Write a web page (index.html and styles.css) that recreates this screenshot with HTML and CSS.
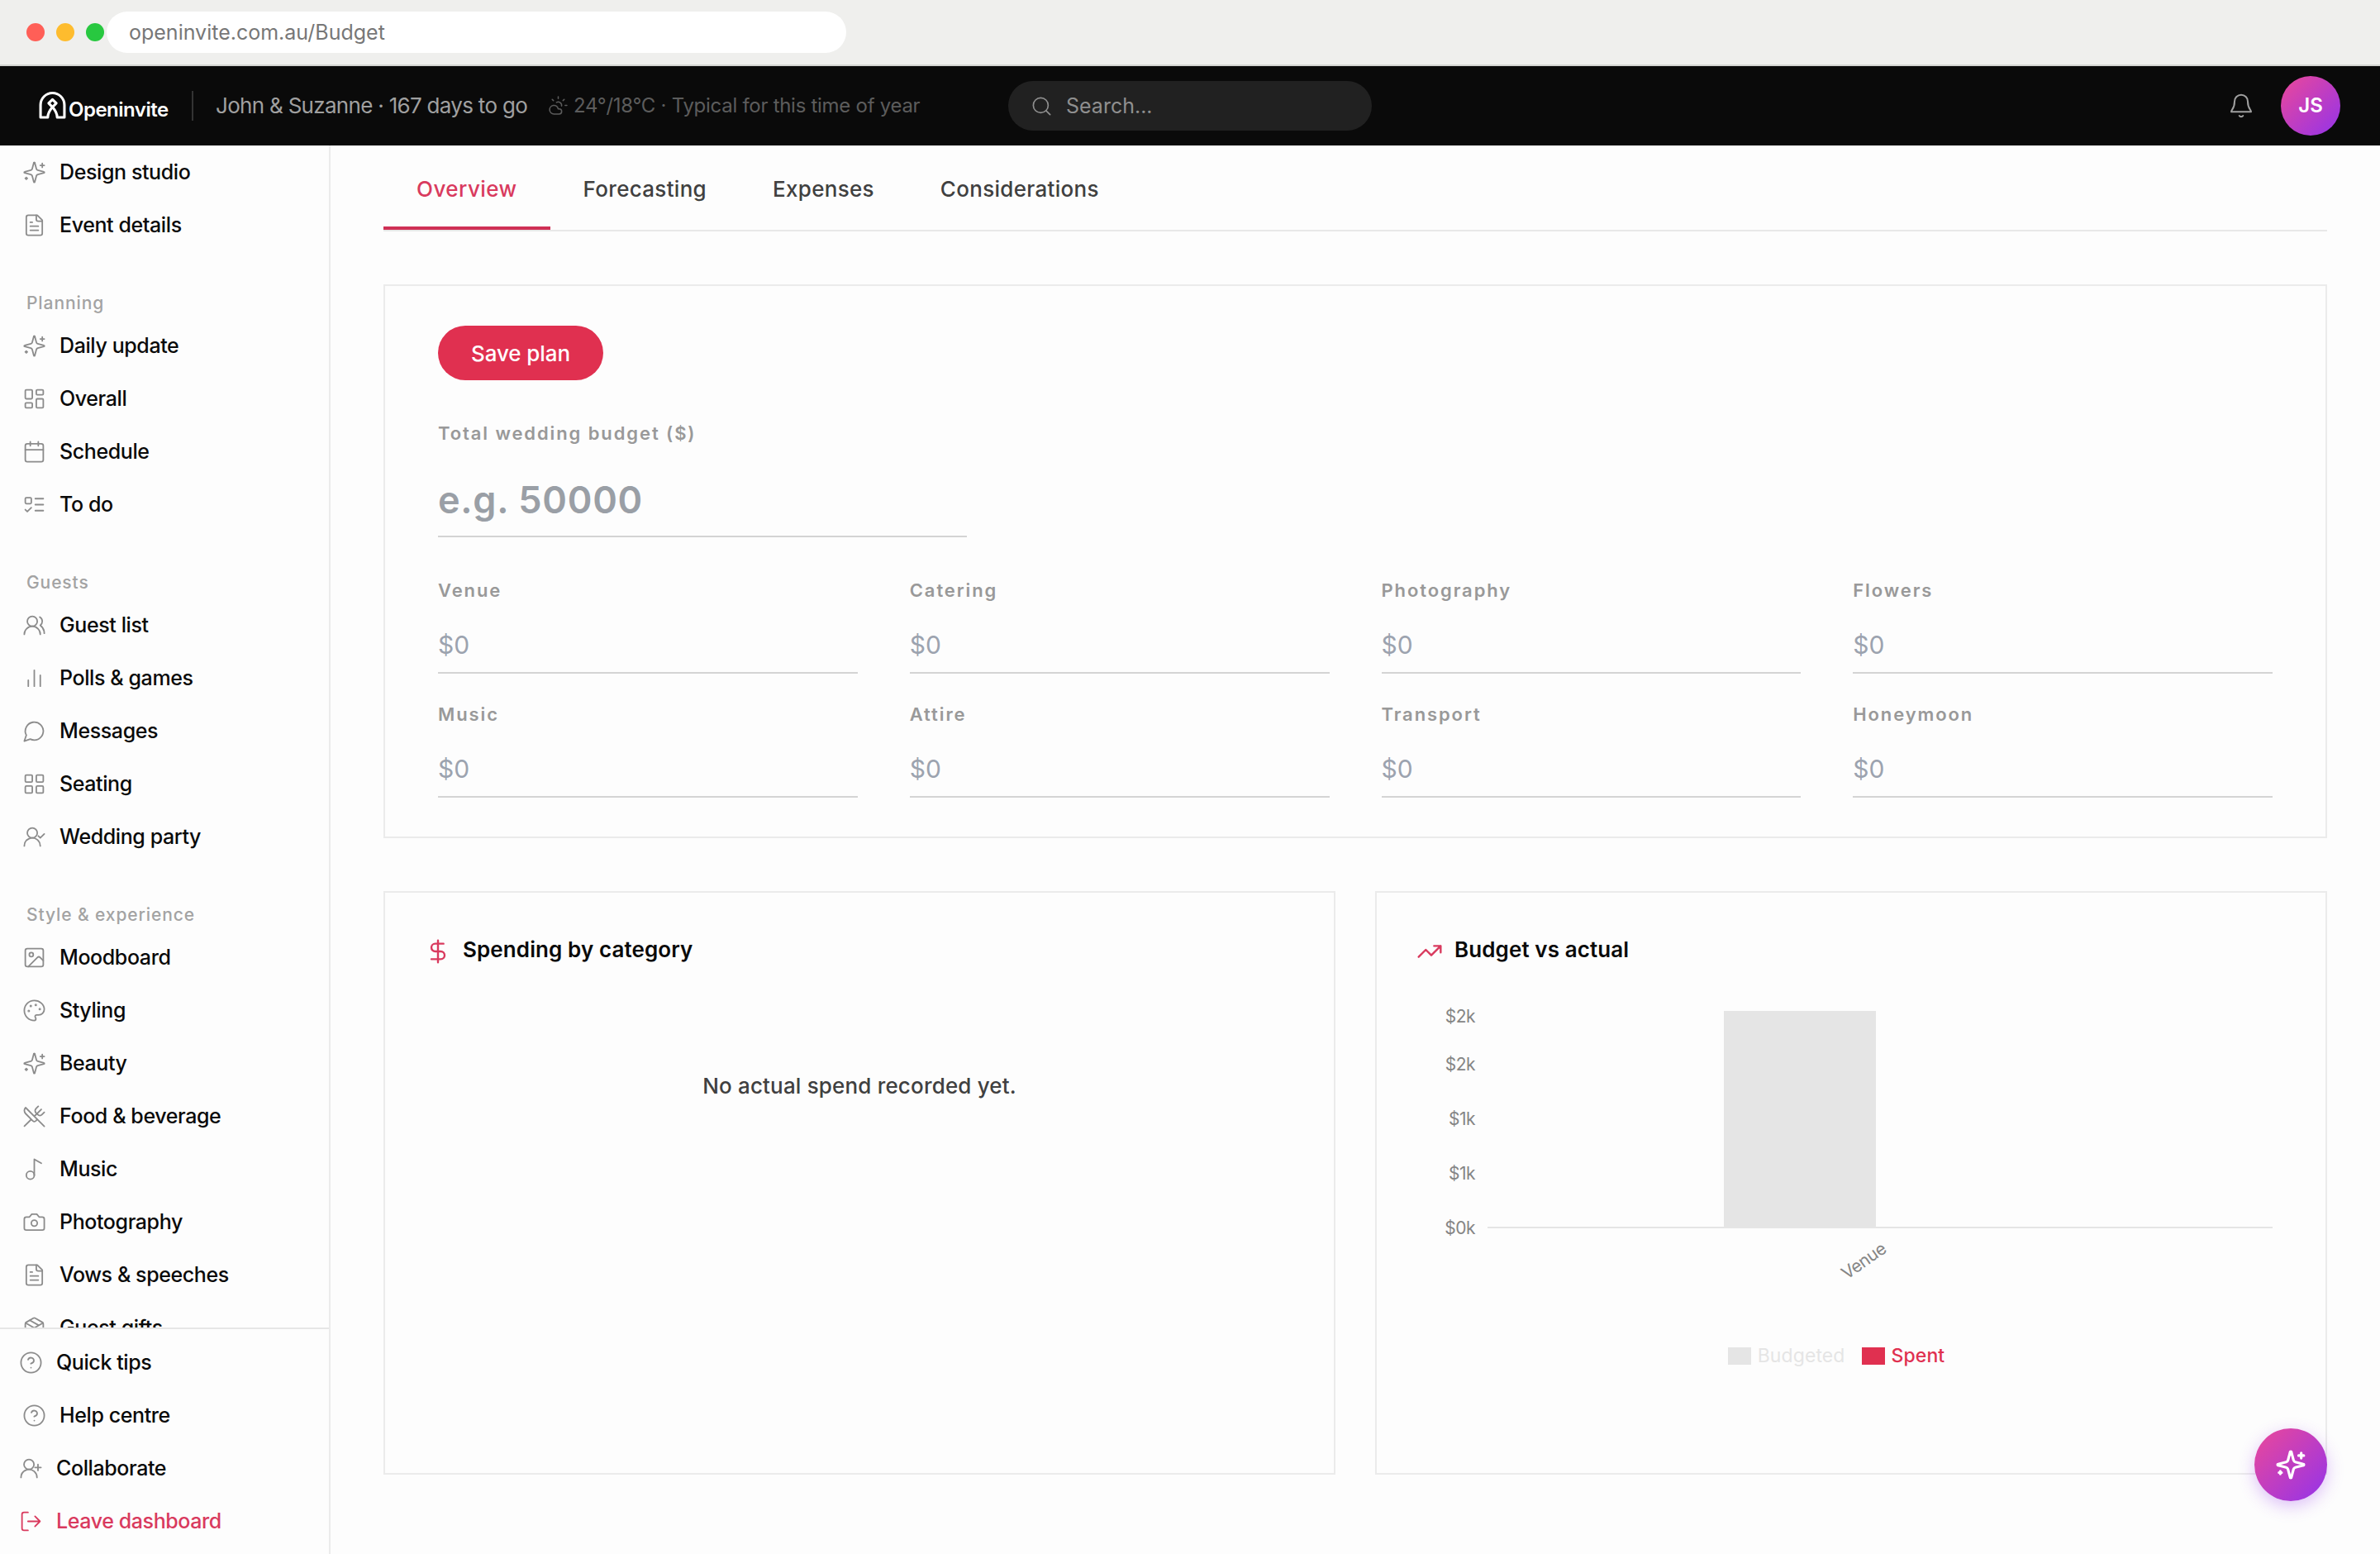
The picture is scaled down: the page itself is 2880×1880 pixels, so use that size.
FILE: index.html
```html
<!DOCTYPE html>
<html lang="en">
<head>
    <meta charset="UTF-8">
    <meta name="viewport" content="width=device-width, initial-scale=1.0">
    <title>Openinvite - Budget</title>
    <link rel="stylesheet" href="styles.css">
</head>
<body>
    <!-- Icon sprite -->
    <svg class="sprite">
        <symbol id="sparkles" viewBox="0 0 24 24"><path d="M9.9 15.5A2 2 0 0 0 8.5 14.1L2.4 12.5a.5.5 0 0 1 0-1L8.5 9.9A2 2 0 0 0 9.9 8.5l1.6-6.1a.5.5 0 0 1 1 0L14.1 8.5a2 2 0 0 0 1.4 1.4l6.1 1.6a.5.5 0 0 1 0 1l-6.1 1.6a2 2 0 0 0-1.4 1.4l-1.6 6.1a.5.5 0 0 1-1 0z"/><path d="M20 3v4M22 5h-4M4 17v2M5 18H3"/></symbol>
        <symbol id="file" viewBox="0 0 24 24"><path d="M15 2H6a2 2 0 0 0-2 2v16a2 2 0 0 0 2 2h12a2 2 0 0 0 2-2V7z"/><path d="M14 2v4a2 2 0 0 0 2 2h4M10 9H8M16 13H8M16 17H8"/></symbol>
        <symbol id="dashboard" viewBox="0 0 24 24"><rect x="3" y="3" width="7" height="9" rx="1"/><rect x="14" y="3" width="7" height="5" rx="1"/><rect x="14" y="12" width="7" height="9" rx="1"/><rect x="3" y="16" width="7" height="5" rx="1"/></symbol>
        <symbol id="calendar" viewBox="0 0 24 24"><path d="M8 2v4M16 2v4M3 10h18"/><rect x="3" y="4" width="18" height="18" rx="2"/></symbol>
        <symbol id="todo" viewBox="0 0 24 24"><rect x="3" y="5" width="6" height="6" rx="1"/><path d="m3 17 2 2 4-4M13 6h8M13 12h8M13 18h8"/></symbol>
        <symbol id="users" viewBox="0 0 24 24"><path d="M18 21a8 8 0 0 0-16 0"/><circle cx="10" cy="8" r="5"/><path d="M22 20c0-3.4-2-6.5-4-8a5 5 0 0 0-.5-8.3"/></symbol>
        <symbol id="bars" viewBox="0 0 24 24"><path d="M6 20v-6M12 20V4M18 20V9"/></symbol>
        <symbol id="message" viewBox="0 0 24 24"><path d="M7.9 20A9 9 0 1 0 4 16.1L2 22Z"/></symbol>
        <symbol id="grid" viewBox="0 0 24 24"><rect x="3" y="3" width="7" height="7" rx="1"/><rect x="14" y="3" width="7" height="7" rx="1"/><rect x="14" y="14" width="7" height="7" rx="1"/><rect x="3" y="14" width="7" height="7" rx="1"/></symbol>
        <symbol id="user-check" viewBox="0 0 24 24"><path d="M2 21a8 8 0 0 1 13.3-6c1.7 1.5 2.7 3.7 2.7 6"/><circle cx="10" cy="8" r="5"/><path d="m16 11 2 2 4-4"/></symbol>
        <symbol id="image" viewBox="0 0 24 24"><rect x="3" y="3" width="18" height="18" rx="2"/><circle cx="9" cy="9" r="2"/><path d="m21 15-3.1-3.1a2 2 0 0 0-2.8 0L6 21"/></symbol>
        <symbol id="palette" viewBox="0 0 24 24"><path d="M12 2C6.5 2 2 6.5 2 12s4.5 10 10 10c.9 0 1.6-.7 1.6-1.7 0-.4-.2-.8-.4-1.1-.3-.3-.4-.7-.4-1.1a1.6 1.6 0 0 1 1.6-1.7h2c3.1 0 5.6-2.5 5.6-5.6C22 6 17.5 2 12 2z"/><circle cx="13.5" cy="6.5" r=".5"/><circle cx="17.5" cy="10.5" r=".5"/><circle cx="8.5" cy="7.5" r=".5"/><circle cx="6.5" cy="12.5" r=".5"/></symbol>
        <symbol id="utensils" viewBox="0 0 24 24"><path d="m16 2-2.3 2.3a3 3 0 0 0 0 4.2l1.8 1.8a3 3 0 0 0 4.2 0L22 8"/><path d="M15 15 3.3 3.3a4.2 4.2 0 0 0 0 6l7.3 7.3c.7.7 2 .7 2.8 0L15 15Zm0 0 7 7M2.1 21.8l6.4-6.3M19 5l-7 7"/></symbol>
        <symbol id="music" viewBox="0 0 24 24"><circle cx="8" cy="18" r="4"/><path d="M12 18V2l7 4"/></symbol>
        <symbol id="camera" viewBox="0 0 24 24"><path d="M14.5 4h-5L7 7H4a2 2 0 0 0-2 2v9a2 2 0 0 0 2 2h16a2 2 0 0 0 2-2V9a2 2 0 0 0-2-2h-3z"/><circle cx="12" cy="13" r="3"/></symbol>
        <symbol id="package" viewBox="0 0 24 24"><path d="M11 21.7a2 2 0 0 0 2 0l7-4A2 2 0 0 0 21 16V8a2 2 0 0 0-1-1.7l-7-4a2 2 0 0 0-2 0l-7 4A2 2 0 0 0 3 8v8a2 2 0 0 0 1 1.7z"/><path d="M12 22V12M3.3 7 12 12l8.7-5M7.5 4.3l9 5.1"/></symbol>
        <symbol id="help" viewBox="0 0 24 24"><circle cx="12" cy="12" r="10"/><path d="M9.1 9a3 3 0 0 1 5.8 1c0 2-3 3-3 3M12 17h.01"/></symbol>
        <symbol id="user-plus" viewBox="0 0 24 24"><path d="M2 21a8 8 0 0 1 13.3-6c1.7 1.5 2.7 3.7 2.7 6"/><circle cx="10" cy="8" r="5"/><path d="M19 8v6M22 11h-6"/></symbol>
        <symbol id="leave" viewBox="0 0 24 24"><path d="M9 3H5a2 2 0 0 0-2 2v14a2 2 0 0 0 2 2h4M16 17l5-5-5-5M21 12H9"/></symbol>
        <symbol id="weather" viewBox="0 0 24 24"><path d="M12 2v2M5 5l1.4 1.4M20 12h2M19 5l-1.4 1.4M15.9 12.7a4 4 0 0 0-5.9-4.2"/><path d="M13 22H7a5 5 0 1 1 4.900-6H13a3 3 0 0 1 0 6Z"/></symbol>
        <symbol id="search" viewBox="0 0 24 24"><circle cx="11" cy="11" r="8"/><path d="m21 21-4.3-4.3"/></symbol>
        <symbol id="bell" viewBox="0 0 24 24"><path d="M6 8a6 6 0 0 1 12 0c0 7 3 7 3 9.5H3C3 15 6 15 6 8M10.3 21a2 2 0 0 0 3.4 0"/></symbol>
        <symbol id="dollar" viewBox="0 0 24 24"><path d="M12 2v20M17 5H9.5a3.5 3.5 0 0 0 0 7h5a3.5 3.5 0 0 1 0 7H6"/></symbol>
        <symbol id="trend" viewBox="0 0 24 24"><path d="m22 7-8.5 8.5-5-5L2 17M16 7h6v6"/></symbol>
    </svg>

    <!-- Browser bar -->
    <div class="browser">
        <span class="dot red"></span>
        <span class="dot yellow"></span>
        <span class="dot green"></span>
        <div class="url">openinvite.com.au/Budget</div>
    </div>

    <!-- Header -->
    <header class="header">
        <div class="logo">
            <svg class="logo-mark" viewBox="0 0 32 32"><path d="M2 30V15.5a14 14 0 0 1 28 0V30h-8.5c0-5-2-8-5.500-12-3.500 4-5.500 7-5.500 12z"/><path d="M16 18l-4.500-4.500 4.500-4.500 4.500 4.500z"/></svg>
            <span>Openinvite</span>
        </div>
        <div class="couple">John &amp; Suzanne · 167 days to go</div>
        <div class="weather">
            <svg class="icon"><use href="#weather"/></svg>
            <span>24°/18°C · Typical for this time of year</span>
        </div>
        <div class="search">
            <svg class="icon"><use href="#search"/></svg>
            <span>Search...</span>
        </div>
        <svg class="icon bell"><use href="#bell"/></svg>
        <div class="avatar">JS</div>
    </header>

    <div class="layout">
        <!-- Sidebar -->
        <aside class="sidebar">
            <nav class="menu">
                <a class="item"><svg class="icon"><use href="#sparkles"/></svg>Design studio</a>
                <a class="item"><svg class="icon"><use href="#file"/></svg>Event details</a>

                <h4>Planning</h4>
                <a class="item"><svg class="icon"><use href="#sparkles"/></svg>Daily update</a>
                <a class="item"><svg class="icon"><use href="#dashboard"/></svg>Overall</a>
                <a class="item"><svg class="icon"><use href="#calendar"/></svg>Schedule</a>
                <a class="item"><svg class="icon"><use href="#todo"/></svg>To do</a>

                <h4>Guests</h4>
                <a class="item"><svg class="icon"><use href="#users"/></svg>Guest list</a>
                <a class="item"><svg class="icon"><use href="#bars"/></svg>Polls &amp; games</a>
                <a class="item"><svg class="icon"><use href="#message"/></svg>Messages</a>
                <a class="item"><svg class="icon"><use href="#grid"/></svg>Seating</a>
                <a class="item"><svg class="icon"><use href="#user-check"/></svg>Wedding party</a>

                <h4>Style &amp; experience</h4>
                <a class="item"><svg class="icon"><use href="#image"/></svg>Moodboard</a>
                <a class="item"><svg class="icon"><use href="#palette"/></svg>Styling</a>
                <a class="item"><svg class="icon"><use href="#sparkles"/></svg>Beauty</a>
                <a class="item"><svg class="icon"><use href="#utensils"/></svg>Food &amp; beverage</a>
                <a class="item"><svg class="icon"><use href="#music"/></svg>Music</a>
                <a class="item"><svg class="icon"><use href="#camera"/></svg>Photography</a>
                <a class="item"><svg class="icon"><use href="#file"/></svg>Vows &amp; speeches</a>
                <a class="item"><svg class="icon"><use href="#package"/></svg>Guest gifts</a>
            </nav>
            <div class="menu-bottom">
                <a class="item"><svg class="icon"><use href="#help"/></svg>Quick tips</a>
                <a class="item indent"><svg class="icon"><use href="#help"/></svg>Help centre</a>
                <a class="item"><svg class="icon"><use href="#user-plus"/></svg>Collaborate</a>
                <a class="item leave"><svg class="icon"><use href="#leave"/></svg>Leave dashboard</a>
            </div>
        </aside>

        <main class="content">
            <div class="tabs">
                <a class="tab active">Overview</a>
                <a class="tab">Forecasting</a>
                <a class="tab">Expenses</a>
                <a class="tab">Considerations</a>
            </div>

            <!-- Budget form -->
            <form class="card plan">
                <button type="button" class="save">Save plan</button>
                <label class="total">
                    <span>Total wedding budget ($)</span>
                    <input type="text" placeholder="e.g. 50000">
                </label>
                <div class="fields">
                    <label><span>Venue</span><input type="text" placeholder="$0"></label>
                    <label><span>Catering</span><input type="text" placeholder="$0"></label>
                    <label><span>Photography</span><input type="text" placeholder="$0"></label>
                    <label><span>Flowers</span><input type="text" placeholder="$0"></label>
                    <label><span>Music</span><input type="text" placeholder="$0"></label>
                    <label><span>Attire</span><input type="text" placeholder="$0"></label>
                    <label><span>Transport</span><input type="text" placeholder="$0"></label>
                    <label><span>Honeymoon</span><input type="text" placeholder="$0"></label>
                </div>
            </form>

            <div class="charts">
                <section class="card chart">
                    <h3><svg class="icon"><use href="#dollar"/></svg>Spending by category</h3>
                    <p class="empty">No actual spend recorded yet.</p>
                </section>

                <section class="card chart">
                    <h3><svg class="icon"><use href="#trend"/></svg>Budget vs actual</h3>
                    <svg class="plot" viewBox="0 0 1036 370">
                        <g class="ticks">
                            <text x="71" y="45">$2k</text>
                            <text x="71" y="103">$2k</text>
                            <text x="71" y="169">$1k</text>
                            <text x="71" y="235">$1k</text>
                            <text x="71" y="301">$0k</text>
                        </g>
                        <rect class="bar" x="372" y="31" width="184" height="262"/>
                        <path class="axis" d="M86 293H1036"/>
                        <text class="tick-x" transform="translate(570 322) rotate(-35)">Venue</text>
                    </svg>
                    <div class="legend">
                        <span class="budgeted"><i></i>Budgeted</span>
                        <span class="spent"><i></i>Spent</span>
                    </div>
                </section>
            </div>
        </main>
    </div>

    <button type="button" class="fab"><svg class="icon"><use href="#sparkles"/></svg></button>
</body>
</html>
```
FILE: styles.css
```css
* {
    box-sizing: border-box;
}

body {
    margin: 0;
    height: 1880px;
    overflow: hidden;
    display: flex;
    flex-direction: column;
    font-family: Inter, "Liberation Sans", sans-serif;
    background-color: #fdfdfd;
    color: #0a0a0a;
}

.sprite {
    display: none;
}

.icon {
    width: 29px;
    height: 29px;
    flex: none;
    fill: none;
    stroke: currentColor;
    stroke-width: 1.5;
    stroke-linecap: round;
    stroke-linejoin: round;
}

/* Browser bar */
.browser {
    height: 80px;
    flex: none;
    display: flex;
    align-items: center;
    gap: 14px;
    padding-left: 32px;
    background-color: #efefed;
    border-bottom: 2px solid #d3d4d1;
}

.dot {
    width: 22px;
    height: 22px;
    border-radius: 50%;
}

.red { background-color: #ff5f57; }
.yellow { background-color: #febc2e; }
.green { background-color: #28c840; }

.url {
    width: 895px;
    height: 50px;
    margin-left: -11px;
    padding-left: 27px;
    line-height: 50px;
    border-radius: 25px;
    background-color: white;
    color: #777;
    font-size: 25px;
}

/* Header */
.header {
    height: 96px;
    flex: none;
    display: flex;
    align-items: center;
    padding: 0 48px 0 47px;
    background-color: #0a0a0a;
    color: #a0a0a0;
}

.logo {
    width: 187px;
    height: 36px;
    display: flex;
    align-items: center;
    gap: 3px;
    border-right: 2px solid #333;
    color: white;
    font-size: 24px;
    font-weight: 600;
    letter-spacing: -0.5px;
}

.logo span {
    padding-top: 8px;
}

.logo-mark {
    width: 33px;
    height: 33px;
    margin-top: -2px;
    fill: none;
    stroke: white;
    stroke-width: 3;
    stroke-linejoin: round;
}

.couple {
    width: 403px;
    padding: 0 0 2px 27px;
    font-size: 26px;
    letter-spacing: -0.7px;
    white-space: nowrap;
}

.weather {
    width: 583px;
    padding: 0 0 1px 26px;
    display: flex;
    align-items: center;
    gap: 6px;
    color: #5c5c5c;
    font-size: 24px;
    letter-spacing: -0.28px;
    white-space: nowrap;
}

.weather .icon {
    width: 25px;
    height: 25px;
}

.search {
    width: 440px;
    height: 60px;
    display: flex;
    align-items: center;
    gap: 16px;
    padding-left: 27px;
    border-radius: 30px;
    background-color: #212121;
    color: #8f8f8f;
    font-size: 25px;
}

.search .icon {
    width: 27px;
    height: 27px;
}

.bell {
    width: 32px;
    height: 32px;
    margin-left: auto;
}

.avatar {
    width: 72px;
    height: 72px;
    margin-left: 32px;
    line-height: 72px;
    text-align: center;
    border-radius: 50%;
    background: linear-gradient(135deg, #ec4899, #9333ea);
    color: white;
    font-size: 24px;
    font-weight: 600;
}

.layout {
    flex: 1;
    min-height: 0;
    display: flex;
}

/* Sidebar */
.sidebar {
    width: 400px;
    flex: none;
    display: flex;
    flex-direction: column;
    border-right: 2px solid #ebebeb;
}

.menu {
    height: 1430px;
    overflow: hidden;
    padding-left: 27px;
}

.item {
    height: 64px;
    display: flex;
    align-items: center;
    gap: 16px;
    font-size: 25px;
    font-weight: 500;
    letter-spacing: -0.4px;
}

.item .icon {
    color: #8c8c8c;
}

.menu h4 {
    height: 82px;
    margin: 0;
    padding: 50px 0 0 5px;
    line-height: 26px;
    color: #a3a3a3;
    font-size: 21px;
    font-weight: 500;
    letter-spacing: 0.9px;
}

.menu-bottom {
    flex: 1;
    padding: 8px 0 0 23px;
    border-top: 2px solid #e6e6e6;
}

.indent {
    padding-left: 4px;
}

.leave,
.leave .icon {
    color: #d93a5e;
}

/* Content */
.content {
    flex: 1;
    padding: 0 64px;
}

.tabs {
    height: 104px;
    display: flex;
    border-bottom: 2px solid #e8e8e8;
}

.tab {
    height: 102px;
    padding: 0 40px;
    line-height: 106px;
    color: #404040;
    font-size: 26px;
    font-weight: 500;
    letter-spacing: 0.3px;
}

.active {
    color: #d93a5e;
    border-bottom: 4px solid #cf3055;
    letter-spacing: 0.45px;
}

.card {
    border: 2px solid #ebebeb;
}

.plan {
    height: 670px;
    margin-top: 64px;
    padding: 48px 64px;
}

.save {
    display: block;
    width: 200px;
    height: 66px;
    border: none;
    border-radius: 33px;
    background-color: #e03050;
    color: white;
    font: 500 26px Inter, sans-serif;
    letter-spacing: -0.1px;
}

label {
    display: block;
}

label span {
    display: block;
    line-height: 30px;
    color: #999;
    font-size: 22px;
    font-weight: 600;
    letter-spacing: 1.9px;
}

input {
    display: block;
    width: 100%;
    padding: 0;
    border: none;
    border-bottom: 2px solid #d4d4d4;
    background: none;
    font: 400 30px Inter, sans-serif;
}

input::placeholder {
    color: #9ca3af;
    opacity: 1;
}

.total {
    width: 640px;
    margin-top: 49px;
}

.total input {
    height: 88px;
    margin-top: 23px;
    padding-bottom: 2px;
    font-size: 45px;
    font-weight: 600;
    letter-spacing: 0.7px;
}

.total input::placeholder {
    color: #9a9fa6;
}

.fields {
    display: grid;
    grid-template-columns: repeat(4, 1fr);
    gap: 34px 63px;
    margin-top: 49px;
}

.fields input {
    height: 66px;
    margin-top: 20px;
    padding-bottom: 2px;
}

.charts {
    display: grid;
    grid-template-columns: repeat(2, minmax(0, 1fr));
    gap: 48px;
    margin-top: 64px;
}

.chart {
    height: 706px;
    padding: 48px 64px 0 48px;
}

.chart h3 {
    display: flex;
    align-items: center;
    gap: 14px;
    height: 40px;
    margin: 0;
    font-size: 26px;
    font-weight: 600;
    letter-spacing: 0.1px;
}

.chart h3 .icon {
    width: 32px;
    height: 32px;
    margin-top: 6px;
    color: #d93a5e;
    stroke-width: 1.8;
}

.empty {
    margin: 129px 0 0;
    padding-left: 16px;
    line-height: 34px;
    text-align: center;
    color: #404040;
    font-size: 26px;
    font-weight: 500;
    letter-spacing: 0.17px;
}

.plot {
    display: block;
    width: 1036px;
    height: 370px;
    margin-top: 24px;
}

.plot text {
    fill: #858585;
    font-size: 21px;
    text-anchor: end;
    letter-spacing: -0.5px;
}

.bar {
    fill: #e5e5e5;
}

.axis {
    stroke: #e5e5e5;
    stroke-width: 2;
}

.legend {
    display: flex;
    justify-content: center;
    gap: 20px;
    margin-top: 63px;
    padding-right: 20px;
    font-size: 23px;
    line-height: 30px;
    letter-spacing: 0.1px;
}

.legend span {
    display: flex;
    align-items: center;
    gap: 8px;
}

.legend i {
    width: 28px;
    height: 21px;
    background-color: currentColor;
}

.budgeted {
    color: #e5e5e5;
}

.spent {
    color: #e03050;
    font-weight: 500;
}

.fab {
    position: fixed;
    right: 64px;
    bottom: 64px;
    width: 88px;
    height: 88px;
    padding: 0;
    display: flex;
    align-items: center;
    justify-content: center;
    border: none;
    border-radius: 50%;
    background: linear-gradient(135deg, #ec4899, #9333ea);
    box-shadow: 0 6px 20px rgba(147, 51, 234, 0.3);
    color: white;
}

.fab .icon {
    width: 38px;
    height: 38px;
    stroke-width: 2;
}
```
